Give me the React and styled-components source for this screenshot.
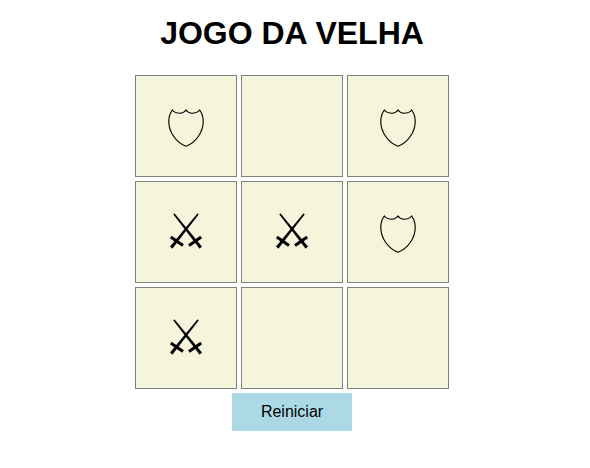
import React from "react";
import styled, { createGlobalStyle } from "styled-components";

const board = ["O", "", "O", "X", "X", "O", "X", "", ""];

const GlobalStyle = createGlobalStyle`
  html, body {
    margin: 0;
    padding: 0;
    background: #fff;
  }
`;

const Page = styled.div`
  width: 584px;
  display: flex;
  flex-direction: column;
  align-items: center;
  font-family: "Liberation Sans", Arial, sans-serif;
`;

const Title = styled.h1`
  margin: 15px 0 23px;
  font-size: 32px;
  line-height: 37px;
  font-weight: bold;
  color: #000;
`;

const Grid = styled.div`
  display: grid;
  grid-template-columns: repeat(3, 102px);
  grid-auto-rows: 102px;
  gap: 4px;
`;

const Cell = styled.div`
  box-sizing: border-box;
  border: 1px solid gray;
  background: beige;
  display: flex;
  align-items: center;
  justify-content: center;
`;

const ResetButton = styled.button`
  width: 120px;
  height: 38px;
  margin-top: 4px;
  border: none;
  background: lightblue;
  color: #000;
  font-family: inherit;
  font-size: 16px;
  cursor: pointer;
`;

const Shield = () => (
  <svg width="44" height="44" viewBox="0 0 44 44" fill="none" stroke="#000" strokeWidth="1.15">
    <path d="M8.3 6 C10 8.4 13 9.2 16 9.2 C18.5 9.2 20.5 8.2 22 6 C23.5 8.2 25.5 9.2 28 9.2 C31 9.2 34 8.4 35.7 6 C37.8 9 39.3 13.5 39.2 18 C39 28 32 38.5 22 42.2 C12 38.5 5 28 4.8 18 C4.7 13.5 6.2 9 8.3 6 Z" />
  </svg>
);

const Swords = () => (
  <svg width="44" height="44" viewBox="0 0 44 44" fill="#000" stroke="#000" strokeWidth="0.3">
    <path d="M10.5 3.6 L9.5 4.4 L35.6 38.4 L37.8 36.6 Z" />
    <path d="M33.5 3.6 L34.5 4.4 L8.4 38.4 L6.2 36.6 Z" />
    <path d="M6.8 27 L19 35.5" fill="none" strokeWidth="3" />
    <path d="M25 35.5 L37.2 27" fill="none" strokeWidth="3" />
  </svg>
);

const App = () => {
  return (
    <Page>
      <GlobalStyle />
      <Title>JOGO DA VELHA</Title>
      <Grid>
        {board.map((value, i) => (
          <Cell key={i}>
            {value === "X" && <Swords />}
            {value === "O" && <Shield />}
          </Cell>
        ))}
      </Grid>
      <ResetButton>Reiniciar</ResetButton>
    </Page>
  );
};

export default App;
